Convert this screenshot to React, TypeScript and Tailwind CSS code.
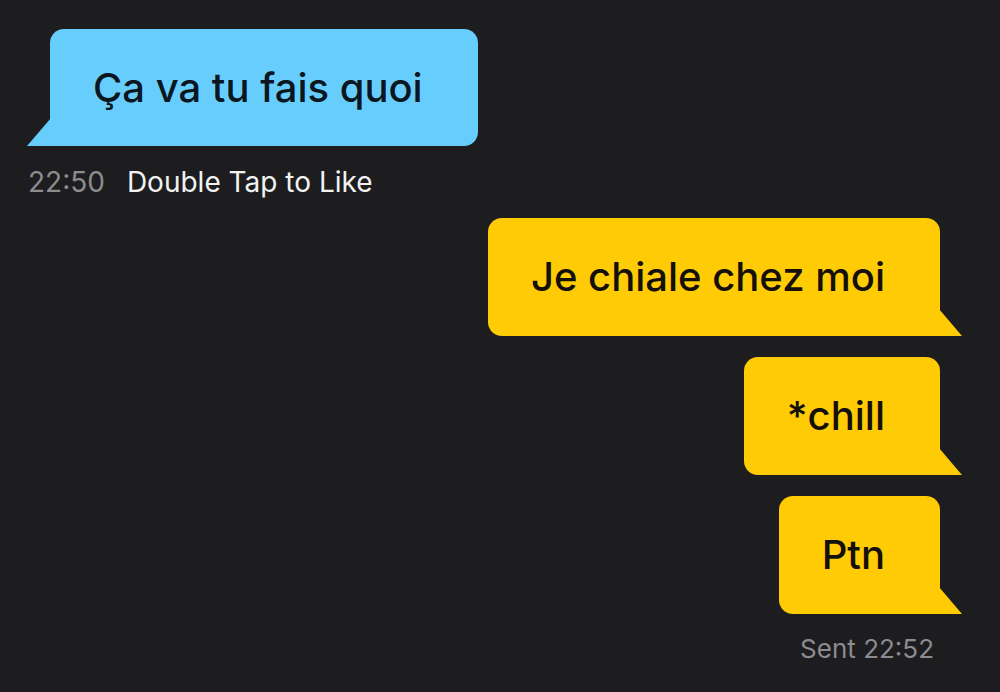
import React from "react";

const font = { fontFamily: 'Inter, "Noto Sans", sans-serif' };

const Received = ({ text }: { text: string }) => (
  <div className="relative self-start ml-[50px]">
    <div className="h-[117px] pl-[43px] pr-[55px] flex items-center bg-[#67cdfd] rounded-[14px] rounded-bl-none text-[40px] font-medium text-[#0b1620]">
      {text}
    </div>
    {/* tail */}
    <svg
      className="absolute -left-[23px] bottom-0"
      width="24"
      height="28"
      viewBox="0 0 24 28"
    >
      <path d="M24 0 L24 28 L0 28 Z" fill="#67cdfd" />
    </svg>
  </div>
);

const Sent = ({ text }: { text: string }) => (
  <div className="relative self-end mr-[60px]">
    <div className="h-[118px] pl-[43px] pr-[55px] flex items-center bg-[#fecb05] rounded-[14px] rounded-br-none text-[40px] font-medium text-[#141008]">
      {text}
    </div>
    <svg
      className="absolute -right-[22px] bottom-0"
      width="23"
      height="27"
      viewBox="0 0 23 27"
    >
      <path d="M0 0 L0 27 L23 27 Z" fill="#fecb05" />
    </svg>
  </div>
);

export default function App() {
  return (
    <div
      className="w-[1000px] h-[692px] bg-[#1d1d1f] flex flex-col pt-[29px] overflow-hidden"
      style={font}
    >
      <Received text="Ça va tu fais quoi" />

      {/* meta row */}
      <div className="flex items-center gap-[22px] ml-[28px] mt-[20px] text-[28px] leading-[32px]">
        <span className="text-[#8c8c8e]">22:50</span>
        <span className="text-[#f2f2f2]">Double Tap to Like</span>
      </div>

      <div className="flex flex-col gap-[21px] mt-[20px]">
        <Sent text="Je chiale chez moi" />
        <Sent text="*chill" />
        <Sent text="Ptn" />
      </div>

      <div className="self-end mr-[66px] mt-[19px] text-[26px] leading-[32px] text-[#8c8c8e]">
        Sent 22:52
      </div>
    </div>
  );
}
